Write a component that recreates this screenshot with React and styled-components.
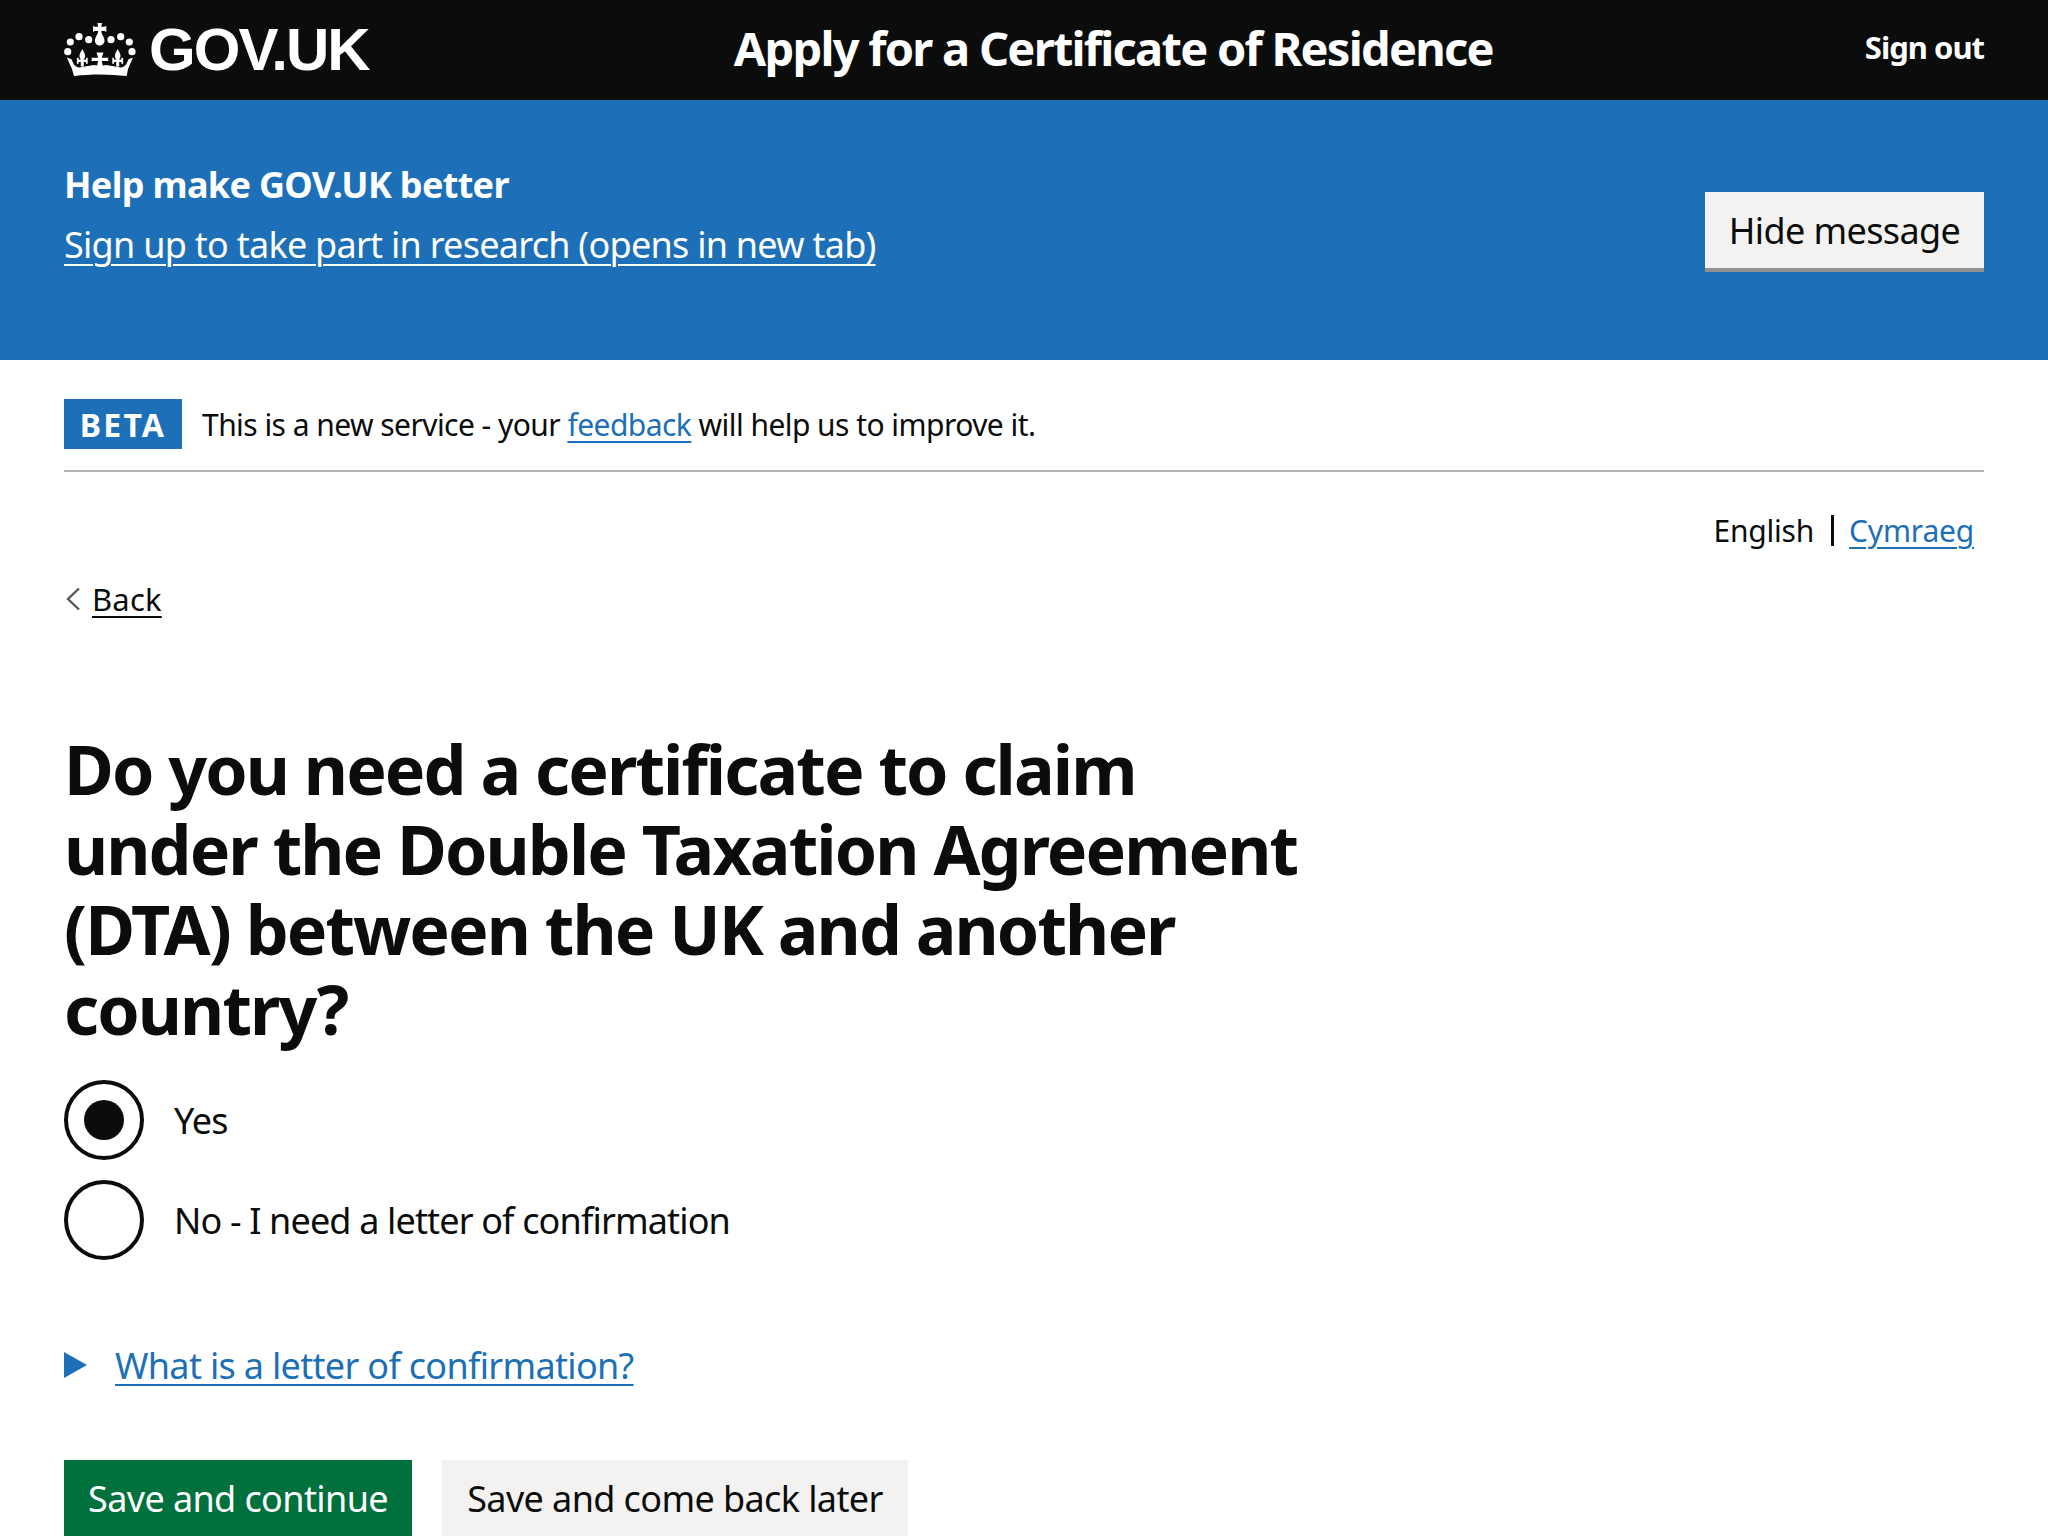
import React from "react";
import styled, { createGlobalStyle } from "styled-components";

const Global = createGlobalStyle`
  html, body { margin: 0; padding: 0; background: #fff; height: 1536px; overflow: hidden; }
  body { font-family: "Noto Sans", "Liberation Sans", sans-serif; color: #0b0c0c; }
`;

const Header = styled.header`
  height: 100px; background: #0b0c0c; color: #fff; box-sizing: border-box;
  padding: 0 64px; display: flex; align-items: center; justify-content: space-between;
`;
const Logo = styled.div`display: flex; align-items: center; gap: 13px;`;
const LogoText = styled.span`font: 700 60px/1 "Liberation Sans", sans-serif; letter-spacing: -1.9px;`;
const Service = styled.div`font-size: 47px; font-weight: 700; letter-spacing: -1.75px; line-height: 96px; padding-bottom: 4px; margin-right: 7px;`;
const SignOut = styled.a`font-size: 31px; font-weight: 700; letter-spacing: -1px; color: #fff; padding-bottom: 6px;`;

const Banner = styled.section`
  height: 260px; background: #1d70b8; color: #fff; box-sizing: border-box; padding: 0 64px 0;
  display: flex; justify-content: space-between; align-items: flex-start;
`;
const BannerText = styled.div`padding-top: 60px;`;
const BannerTitle = styled.div`font-size: 36px; font-weight: 700; letter-spacing: -0.68px; line-height: 50px;`;
const BannerLink = styled.a`
  display: inline-block; margin-top: 10px; font-size: 36px; line-height: 50px; letter-spacing: -0.73px;
  color: #fff; text-decoration: underline; text-decoration-thickness: 2px; text-underline-offset: 6px;
`;
const Button = styled.div`
  display: inline-flex; align-items: center; justify-content: center; box-sizing: border-box;
  font-size: 36px; letter-spacing: -0.6px; height: 76px; width: ${p => p.$w}px;
  background: ${p => p.$bg || "#f3f2f1"}; color: ${p => p.$fg || "#0b0c0c"};
  box-shadow: ${p => p.$shadow ? `0 4px 0 ${p.$shadow}` : "none"}; white-space: nowrap;
`;
const HideButton = styled(Button)`margin-top: 92px;`;

const Page = styled.main`padding: 0 64px;`;
const PhaseBar = styled.div`
  display: flex; align-items: center; gap: 20px; height: 112px; box-sizing: border-box;
  padding-top: 18px; border-bottom: 2px solid #b1b4b6;
`;
const Tag = styled.strong`
  width: 118px; height: 50px; background: #1d70b8; color: #fff; display: flex; align-items: center;
  justify-content: center; font-size: 32px; font-weight: 700; letter-spacing: 2.2px;
`;
const PhaseText = styled.span`font-size: 30px; letter-spacing: -0.55px;`;
const Link = styled.a`
  color: #1d70b8; text-decoration: underline; text-decoration-thickness: 2px; text-underline-offset: 5px;
`;
const Lang = styled.div`
  display: flex; justify-content: flex-end; align-items: center; padding: 34px 10px 0 0; height: 48px;
  font-size: 30px; letter-spacing: -0.2px;
`;
const LangSep = styled.span`width: 3px; height: 31px; background: #0b0c0c; margin: 0 15px 0 17px;`;
const Back = styled.div`display: flex; align-items: center; margin-top: 21px; height: 48px; font-size: 31px; letter-spacing: 0.2px;`;
const BackLink = styled.a`
  color: #0b0c0c; text-decoration: underline; text-decoration-thickness: 2px; text-underline-offset: 5px; margin-left: 12px;
`;
const Title = styled.h1`
  margin: 106px 0 0; width: 1260px; font-size: 68px; line-height: 80px; font-weight: 700; letter-spacing: -1.9px;
`;
const Radios = styled.div`display: flex; flex-direction: column; gap: 20px; margin-top: 31px;`;
const RadioRow = styled.label`display: flex; align-items: center; gap: 30px; font-size: 36px; letter-spacing: -0.85px;`;
const RadioCircle = styled.span`
  width: 80px; height: 80px; border: 4px solid #0b0c0c; border-radius: 50%; box-sizing: border-box;
  display: flex; align-items: center; justify-content: center; flex: none;
  &::after { content: ""; width: 40px; height: 40px; border-radius: 50%; background: ${p => p.$on ? "#0b0c0c" : "transparent"}; }
`;
const Details = styled.div`
  display: flex; align-items: center; gap: 28px; margin-top: 80px; height: 50px; font-size: 36px; letter-spacing: -0.68px;
`;
const Actions = styled.div`display: flex; gap: 30px; margin-top: 70px;`;

const Crown = () => (
  <svg width="72" height="54" viewBox="0 0 72 54" fill="#fff" aria-hidden="true">
    {[[6.3,19],[15,13.7],[24.7,16.7],[47,16.7],[56.7,13.7],[65.3,19],[3.7,28.7],[68,28.7]].map(([x,y]) => (
      <circle key={x+"-"+y} cx={x} cy={y} r="3.6" />
    ))}
    <path d="M33.4 0h4.6l-.7 3.7h3.4l1.6-1v6.4l-1.6-1h-3.4l.5 2.6c1.5 2.4 2.7 4.7 2.7 6.8 0 2.8-2 5-4.8 5s-4.8-2.2-4.8-5c0-2.1 1.2-4.4 2.7-6.8l.5-2.6h-3.4l-1.6 1V2.7l1.6 1h3.4z" />
    <path d="M2.7 34.5 7.5 36.3 9.8 41.5C12 44 15 45 18 44L30 42l6 1 6-1 12 2c3 1 6 0 8.2-2.5l2.3-5.2 4.5-1.8-5 11.5L62.7 53C45 51 27 51 10 53L8 46z" />
    <path d="M18.3 26c1.5 3 2.8 4.5 2.8 7 0 1.5-.8 2.6-1.5 3.4h2.4v-1.7h1.7v6H22v-1.7h-2.2v4.5h-3v-4.5h-2.2v1.7h-1.7v-6h1.7v1.7h2.4c-.7-.8-1.5-1.9-1.5-3.4 0-2.5 1.3-4 2.8-7z" />
    <path d="M53.7 26c1.5 3 2.8 4.5 2.8 7 0 1.5-.8 2.6-1.5 3.4h2.4v-1.7h1.7v6h-1.7v-1.7h-2.2v4.5h-3v-4.5h-2.2v1.7h-1.7v-6h1.7v1.7h2.4c-.7-.8-1.5-1.9-1.5-3.4 0-2.5 1.3-4 2.8-7z" />
    <path d="M32.5 29.5h7l-1.8 5.2h7l-1 1.6 1 1.6h-7l1.2 5.6h-6l1.2-5.6h-7l1-1.6-1-1.6h7z" />
  </svg>
);

export default function App() {
  return (
    <>
      <Global />
      <Header>
        <Logo><Crown /><LogoText>GOV.UK</LogoText></Logo>
        <Service>Apply for a Certificate of Residence</Service>
        <SignOut>Sign out</SignOut>
      </Header>
      <Banner>
        <BannerText>
          <BannerTitle>Help make GOV.UK better</BannerTitle>
          <BannerLink>Sign up to take part in research (opens in new tab)</BannerLink>
        </BannerText>
        <HideButton $w={279} $shadow="#929191">Hide message</HideButton>
      </Banner>
      <Page>
        <PhaseBar>
          <Tag>BETA</Tag>
          <PhaseText>This is a new service - your <Link>feedback</Link> will help us to improve it.</PhaseText>
        </PhaseBar>
        <Lang>English<LangSep /><Link>Cymraeg</Link></Lang>
        <Back>
          <svg width="16" height="24" viewBox="0 0 16 24" fill="none" stroke="#505a5f" strokeWidth="2.4" aria-hidden="true"><path d="M15 1.5 4 12l11 10.5" /></svg>
          <BackLink>Back</BackLink>
        </Back>
        <Title>Do you need a certificate to claim under the Double Taxation Agreement (DTA) between the UK and another country?</Title>
        <Radios>
          <RadioRow><RadioCircle $on />Yes</RadioRow>
          <RadioRow><RadioCircle />No - I need a letter of confirmation</RadioRow>
        </Radios>
        <Details>
          <svg width="23" height="26" viewBox="0 0 23 26" fill="#1d70b8" aria-hidden="true"><path d="M0 0 23 13 0 26z" /></svg>
          <Link>What is a letter of confirmation?</Link>
        </Details>
        <Actions>
          <Button $w={348} $bg="#00703c" $fg="#fff">Save and continue</Button>
          <Button $w={466}>Save and come back later</Button>
        </Actions>
      </Page>
    </>
  );
}
